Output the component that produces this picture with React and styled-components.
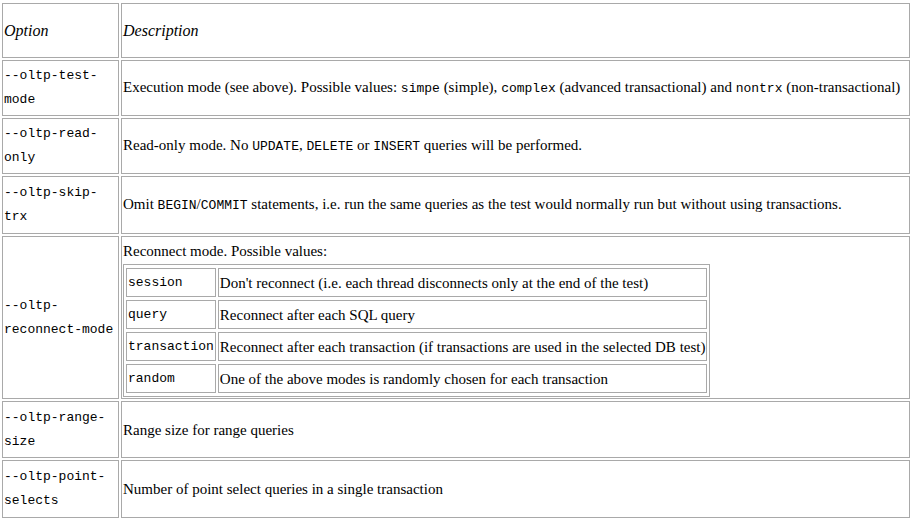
import React from "react";
import styled, { createGlobalStyle } from "styled-components";

const GlobalStyle = createGlobalStyle`
  html, body {
    margin: 0;
    padding: 0;
    background: #ffffff;
  }
  body {
    font-family: "Liberation Serif", "Times New Roman", serif;
    color: #000;
  }
`;

const BORDER = "#a9a9a9";

const Table = styled.table`
  width: 912px;
  margin-top: 1px;
  border-collapse: separate;
  border-spacing: 2px;
  font-family: "Liberation Serif", "Times New Roman", serif;
  font-size: 15px;
  color: #000;
`;

const Cell = styled.td`
  box-sizing: border-box;
  border: 1px solid ${BORDER};
  padding: 1px;
  vertical-align: middle;
  height: ${(p) => (p.$h ? `${p.$h}px` : "auto")};
`;

const OptionCell = styled(Cell)`
  width: 117px;
  font-family: "Liberation Mono", "Courier New", monospace;
  font-size: 13px;
  line-height: 24px;
`;

const HeadCell = styled(Cell)`
  font-style: italic;
  font-size: 16px;
  width: ${(p) => (p.$first ? "117px" : "auto")};
`;

const DescCell = styled(Cell)`
  line-height: 20px;
`;

const Code = styled.code`
  font-family: "Liberation Mono", "Courier New", monospace;
  font-size: 13px;
`;

const Intro = styled.div`
  line-height: 26px;
`;

const SubTable = styled.table`
  border: 1px solid ${BORDER};
  border-collapse: separate;
  border-spacing: 2px 3px;
  font-size: 15px;
`;

const SubKey = styled.td`
  box-sizing: border-box;
  border: 1px solid ${BORDER};
  padding: 1px;
  height: 29px;
  font-family: "Liberation Mono", "Courier New", monospace;
  font-size: 13px;
`;

const SubVal = styled.td`
  box-sizing: border-box;
  border: 1px solid ${BORDER};
  padding: 1px;
  height: 29px;
`;

const modes = [
  ["session", "Don't reconnect (i.e. each thread disconnects only at the end of the test)"],
  ["query", "Reconnect after each SQL query"],
  ["transaction", "Reconnect after each transaction (if transactions are used in the selected DB test)"],
  ["random", "One of the above modes is randomly chosen for each transaction"],
];

export default function App() {
  return (
    <>
      <GlobalStyle />
      <Table>
        <tbody>
          <tr>
            <HeadCell $first $h={55}>Option</HeadCell>
            <HeadCell $h={55}>Description</HeadCell>
          </tr>
          <tr>
            <OptionCell $h={56}>--oltp-test-mode</OptionCell>
            <DescCell $h={56}>
              Execution mode (see above). Possible values: <Code>simpe</Code> (simple),{" "}
              <Code>complex</Code> (advanced transactional) and <Code>nontrx</Code>{" "}
              (non-transactional)
            </DescCell>
          </tr>
          <tr>
            <OptionCell $h={56}>--oltp-read-only</OptionCell>
            <DescCell $h={56}>
              Read-only mode. No <Code>UPDATE</Code>, <Code>DELETE</Code> or{" "}
              <Code>INSERT</Code> queries will be performed.
            </DescCell>
          </tr>
          <tr>
            <OptionCell $h={58}>--oltp-skip-trx</OptionCell>
            <DescCell $h={58}>
              Omit <Code>BEGIN</Code>/<Code>COMMIT</Code> statements, i.e. run the same
              queries as the test would normally run but without using transactions.
            </DescCell>
          </tr>
          <tr>
            <OptionCell>--oltp-reconnect-mode</OptionCell>
            <DescCell>
              <Intro>Reconnect mode. Possible values:</Intro>
              <SubTable>
                <tbody>
                  {modes.map(([k, v]) => (
                    <tr key={k}>
                      <SubKey>{k}</SubKey>
                      <SubVal>{v}</SubVal>
                    </tr>
                  ))}
                </tbody>
              </SubTable>
            </DescCell>
          </tr>
          <tr>
            <OptionCell $h={57}>--oltp-range-size</OptionCell>
            <DescCell $h={57}>Range size for range queries</DescCell>
          </tr>
          <tr>
            <OptionCell $h={58}>--oltp-point-selects</OptionCell>
            <DescCell $h={58}>Number of point select queries in a single transaction</DescCell>
          </tr>
        </tbody>
      </Table>
    </>
  );
}
